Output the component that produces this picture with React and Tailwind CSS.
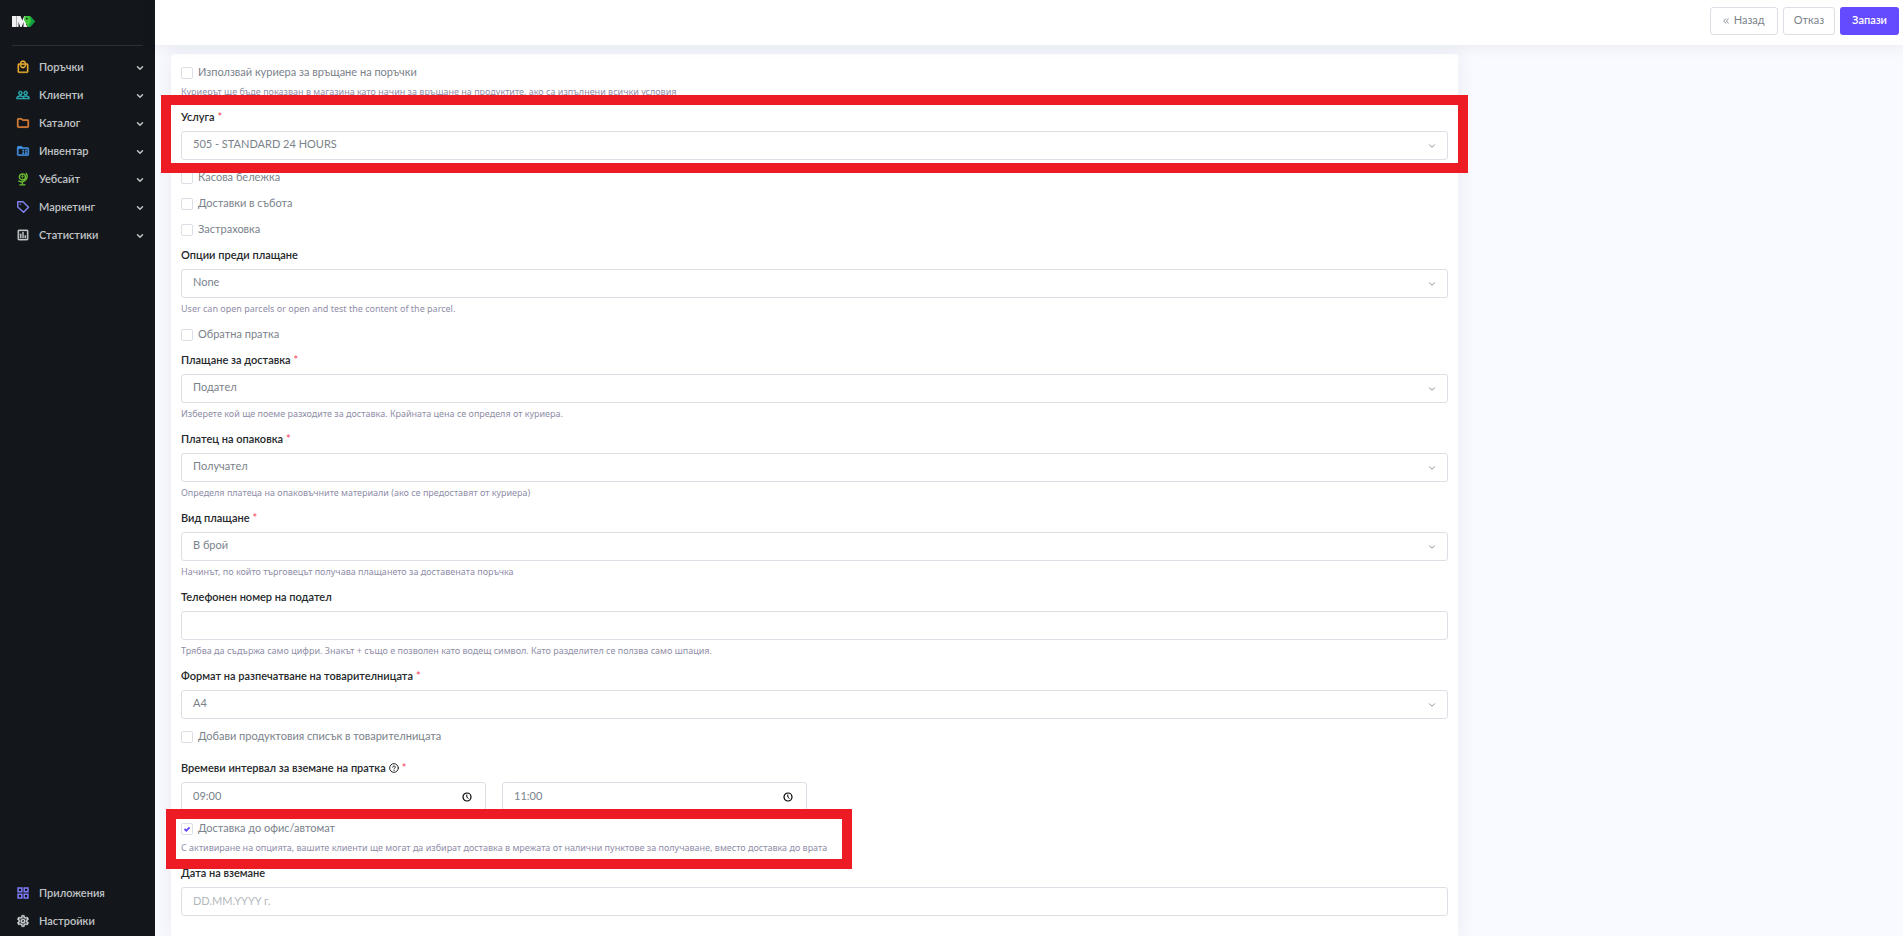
import { useId } from "react";
import { MdOutlineLocalMall, MdPeopleOutline, MdOutlineFolder, MdOutlineAssessment, MdOutlineSettings } from "react-icons/md";

function StockIcon({ className }) {
  return (
    <svg viewBox="0 0 24 24" className={className} fill="currentColor" stroke="currentColor" strokeWidth="0" aria-hidden="true">
      <path fillRule="evenodd" d="M20 6h-8l-2-2H4a2 2 0 0 0-2 2v12a2 2 0 0 0 2 2h16a2 2 0 0 0 2-2V8a2 2 0 0 0-2-2Zm0 12H4V8h16v10Z" />
      <path strokeWidth="0" d="M11 10h3v3h-3zM15.500 10h3v3h-3zM11 14h3v3h-3zM15.500 14h3v3h-3z" />
    </svg>
  );
}

function GlobeIcon({ className }) {
  return (
    <svg viewBox="0 0 24 24" className={className} fill="none" stroke="currentColor" strokeWidth="2.400" strokeLinecap="round" aria-hidden="true">
      <circle cx="11" cy="8.500" r="5.200" />
      <path d="M17.500 2.500a9.300 9.300 0 0 1-12.500 13M11 18v4M6.500 22h9" />
      <path d="M9 7.500h4M11 5v7" strokeWidth="1.200" />
    </svg>
  );
}

function TagIcon({ className }) {
  return (
    <svg viewBox="0 0 24 24" className={className} fill="none" stroke="currentColor" strokeWidth="2.400" strokeLinejoin="round" aria-hidden="true">
      <path d="M3 3h9l9.500 9.500-8.500 8.500L3 12V3Z" />
      <circle cx="7.200" cy="7.200" r="1.200" fill="currentColor" stroke="none" />
    </svg>
  );
}

function AppsIcon({ className }) {
  return (
    <svg viewBox="0 0 24 24" className={className} fill="none" stroke="currentColor" strokeWidth="2.600" aria-hidden="true">
      <path d="M3.500 3.500h6.500v6.500h-6.500zM14 3.500h6.500v6.500h-6.500zM3.500 14h6.500v6.500h-6.500zM14 14h6.500v6.500h-6.500z" />
    </svg>
  );
}

function Chevron({ className }) {
  return (
    <svg viewBox="0 0 8 8" className={className} fill="none" stroke="currentColor" strokeLinecap="round" strokeLinejoin="round" aria-hidden="true">
      <path d="M1.500 2.800 4 5.300l2.500-2.500" />
    </svg>
  );
}

function Logo() {
  return (
    <svg viewBox="0 0 23 11" className="h-[11px] w-[23px]" role="img" aria-label="Лого">
      <path fill="#f1f1f1" d="M0 0h4.700v11H0zM5 0h3.500l1.800 4.500L12.200 0H14v11h-2.500V6l-1.800 5H8.300L6.500 6v5H5z" />
      <path fill="#3fc63b" d="M12.500 0H18l5 5.500-5 5.500h-2l-4-7z" />
      <path fill="#f1f1f1" d="M12 4.500l3.500 6.500H12z" />
      <path fill="#0f9f3f" d="M18 0l5 5.500-5 5.500h-2l3-5.500z" />
      <circle cx="14.800" cy="2.600" r=".9" fill="#13171b" />
    </svg>
  );
}

const nav = [
  { label: "Поръчки", icon: MdOutlineLocalMall, color: "text-[#f2b632] stroke-[0.6px]" },
  { label: "Клиенти", icon: MdPeopleOutline, color: "text-[#2bb8bd] stroke-[0.8px]" },
  { label: "Каталог", icon: MdOutlineFolder, color: "text-[#f0893a] stroke-[0.6px]" },
  { label: "Инвентар", icon: StockIcon, color: "text-[#4597ee] stroke-[0.6px]" },
  { label: "Уебсайт", icon: GlobeIcon, color: "text-[#6cbb32]" },
  { label: "Маркетинг", icon: TagIcon, color: "text-[#8583f5]" },
  { label: "Статистики", icon: MdOutlineAssessment, color: "text-[#c5c8cb] stroke-[0.6px]" },
];

const bottomNav = [
  { label: "Приложения", icon: AppsIcon, color: "text-[#7d7af7]" },
  { label: "Настройки", icon: MdOutlineSettings, color: "text-[#d5d8da] stroke-[0.6px]" },
];

function NavItem({ item, expandable }) {
  const Icon = item.icon;
  return (
    <li>
      <a href="#" className="flex h-7 items-center pl-4 pr-[11px] text-[11px] font-semibold text-[#c0c3c6]">
        <Icon className={`size-3.5 [&>path[fill=none]]:stroke-none ${item.color}`} />
        <span className="ml-[9px] flex-1">{item.label}</span>
        {expandable && <Chevron className="mt-0.5 size-2 stroke-[1.5px]" />}
      </a>
    </li>
  );
}

function Sidebar() {
  return (
    <nav className="flex w-[155px] shrink-0 flex-col bg-[#13171b] pb-px">
      <a href="#" className="mx-3 flex h-[46px] items-center border-b border-[#2c3033] pb-[3px]"><Logo /></a>
      <ul className="mt-[7px] flex-1">
        {nav.map((item) => <NavItem key={item.label} item={item} expandable />)}
      </ul>
      <ul>
        {bottomNav.map((item) => <NavItem key={item.label} item={item} />)}
      </ul>
    </nav>
  );
}

function Label({ id, required, info, children }) {
  return (
    <label htmlFor={id} className="mb-1.5 flex h-4 items-center gap-[3px] text-[11px] font-semibold text-[#25282b]">
      {children}
      {info && (
        <svg viewBox="0 0 12 12" className="size-[10px]" fill="none" stroke="currentColor" strokeWidth="1.200" strokeLinecap="round" aria-hidden="true">
          <circle cx="6" cy="6" r="5.200" />
          <path d="M4.500 5a1.500 1.500 0 1 1 2.200 1.300c-.5.300-.7.500-.7 1M6 9v.1" />
        </svg>
      )}
      {required && <span className="text-[#f8536b]">*</span>}
    </label>
  );
}

function Help({ children }) {
  return <p className="mt-[3px] font-['Noto_Sans',sans-serif] text-[9px] leading-4 text-[#8f8ea8]">{children}</p>;
}

const box = "block h-[29px] w-full rounded-[3px] border border-[#dcdfe5] bg-white px-[11px] pb-0.5 text-[11px] text-[#7a828a] placeholder:text-[#b3b8be]";

function SelectField({ label, value, help, required }) {
  const id = useId();
  return (
    <div>
      <Label id={id} required={required}>{label}</Label>
      <div className="relative">
        <select id={id} className={`${box} appearance-none`} defaultValue={value}>
          <option>{value}</option>
        </select>
        <Chevron className="pointer-events-none absolute right-3 top-[11px] size-2 text-[#8b9299]" />
      </div>
      {help && <Help>{help}</Help>}
    </div>
  );
}

function TextField({ label, placeholder, help }) {
  const id = useId();
  return (
    <div>
      <Label id={id}>{label}</Label>
      <input id={id} type="text" placeholder={placeholder} className={box} />
      {help && <Help>{help}</Help>}
    </div>
  );
}

function TimeInput({ id, value, label }) {
  return (
    <div className="relative w-[305px]">
      <input id={id} type="text" defaultValue={value} aria-label={label} className={box} />
      <svg viewBox="0 0 10 10" className="pointer-events-none absolute right-3.5 top-[10px] size-[10px] text-black" fill="none" stroke="currentColor" strokeWidth="1.200" aria-hidden="true">
        <circle cx="5" cy="5" r="4" />
        <path d="M4.800 2.500v2.700l1.700 1.300" strokeWidth="1" />
      </svg>
    </div>
  );
}

function CheckField({ label, help, checked }) {
  const id = useId();
  return (
    <div>
      <div className="flex h-[17px] items-center gap-[5px]">
        <span className="relative size-3">
          <input id={id} type="checkbox" defaultChecked={checked} className="peer block size-3 appearance-none rounded-[2px] border border-[#dcdfe5] bg-white" />
          <svg viewBox="0 0 12 12" className="pointer-events-none absolute inset-0 hidden size-3 text-[#654bff] peer-checked:block" fill="none" stroke="currentColor" strokeWidth="1.800" aria-hidden="true">
            <path d="M3.500 6l1.800 1.700L8.600 4.300" />
          </svg>
        </span>
        <label htmlFor={id} className="pb-px text-[11px] text-[#7a828a]">{label}</label>
      </div>
      {help && <Help>{help}</Help>}
    </div>
  );
}

export default function App() {
  return (
    <div className="flex h-screen overflow-hidden bg-[#f9faff] font-['Lato','Noto_Sans',sans-serif]">
      <Sidebar />
      <div className="flex min-w-0 flex-1 flex-col">
        <header className="z-10 flex h-[45px] shrink-0 items-center justify-end gap-[5px] bg-white pb-1 pr-1 text-[11px] text-[#7a828a] shadow-[0_2px_14px_rgba(40,50,90,0.08)]">
          <button type="button" className="flex h-7 items-center gap-[5px] rounded-[3px] border border-[#dcdfe5] bg-white px-3">
            <svg viewBox="0 0 6 6" className="size-1.5" fill="none" stroke="currentColor" strokeWidth=".9" aria-hidden="true">
              <path d="M3 .5.700 3 3 5.500M5.700.5 3.400 3l2.300 2.500" />
            </svg>
            Назад
          </button>
          <button type="button" className="h-7 rounded-[3px] border border-[#dcdfe5] bg-white px-2.5">Отказ</button>
          <button type="button" className="h-7 rounded-[3px] bg-[#654bff] px-3 font-semibold text-white">Запази</button>
        </header>
        <main className="min-h-0 flex-1 px-4 pt-[9px]">
          <form className="-mr-px flex min-h-full w-3/4 flex-col gap-[9px] rounded-t-[3px] bg-white p-2.5 shadow-[0_0_20px_rgba(40,50,90,0.08)]">
            <CheckField
              label="Използвай куриера за връщане на поръчки"
              help="Куриерът ще бъде показван в магазина като начин за връщане на продуктите, ако са изпълнени всички условия"
            />
            <div className="relative">
              <SelectField label="Услуга" value="505 - STANDARD 24 HOURS" required />
              <div className="pointer-events-none absolute -inset-x-5 -bottom-[13px] -top-3.5 z-20 border-10 border-[#ed1c24]" />
            </div>
            <CheckField label="Касова бележка" />
            <CheckField label="Доставки в събота" />
            <CheckField label="Застраховка" />
            <SelectField label="Опции преди плащане" value="None" help="User can open parcels or open and test the content of the parcel." />
            <CheckField label="Обратна пратка" />
            <SelectField label="Плащане за доставка" value="Подател" required help="Изберете кой ще поеме разходите за доставка. Крайната цена се определя от куриера." />
            <SelectField label="Платец на опаковка" value="Получател" required help="Определя платеца на опаковъчните материали (ако се предоставят от куриера)" />
            <SelectField label="Вид плащане" value="В брой" required help="Начинът, по който търговецът получава плащането за доставената поръчка" />
            <TextField label="Телефонен номер на подател" help="Трябва да съдържа само цифри. Знакът + също е позволен като водещ символ. Като разделител се ползва само шпация." />
            <SelectField label="Формат на разпечатване на товарителницата" value="A4" required />
            <CheckField label="Добави продуктовия списък в товарителницата" />
            <div className="mt-1.5">
              <Label id="pickup-from" required info>Времеви интервал за вземане на пратка</Label>
              <div className="flex gap-4">
                <TimeInput id="pickup-from" value="09:00" />
                <TimeInput id="pickup-to" value="11:00" label="Краен час" />
              </div>
            </div>
            <div className="relative">
              <CheckField
                label="Доставка до офис/автомат"
                checked
                help="С активиране на опцията, вашите клиенти ще могат да избират доставка в мрежата от налични пунктове за получаване, вместо доставка до врата"
              />
              <div className="pointer-events-none absolute -bottom-[13px] -left-[15px] -top-[11px] z-20 w-[686px] border-10 border-[#ed1c24]" />
            </div>
            <TextField label="Дата на вземане" placeholder="DD.MM.YYYY г." />
          </form>
        </main>
      </div>
    </div>
  );
}
